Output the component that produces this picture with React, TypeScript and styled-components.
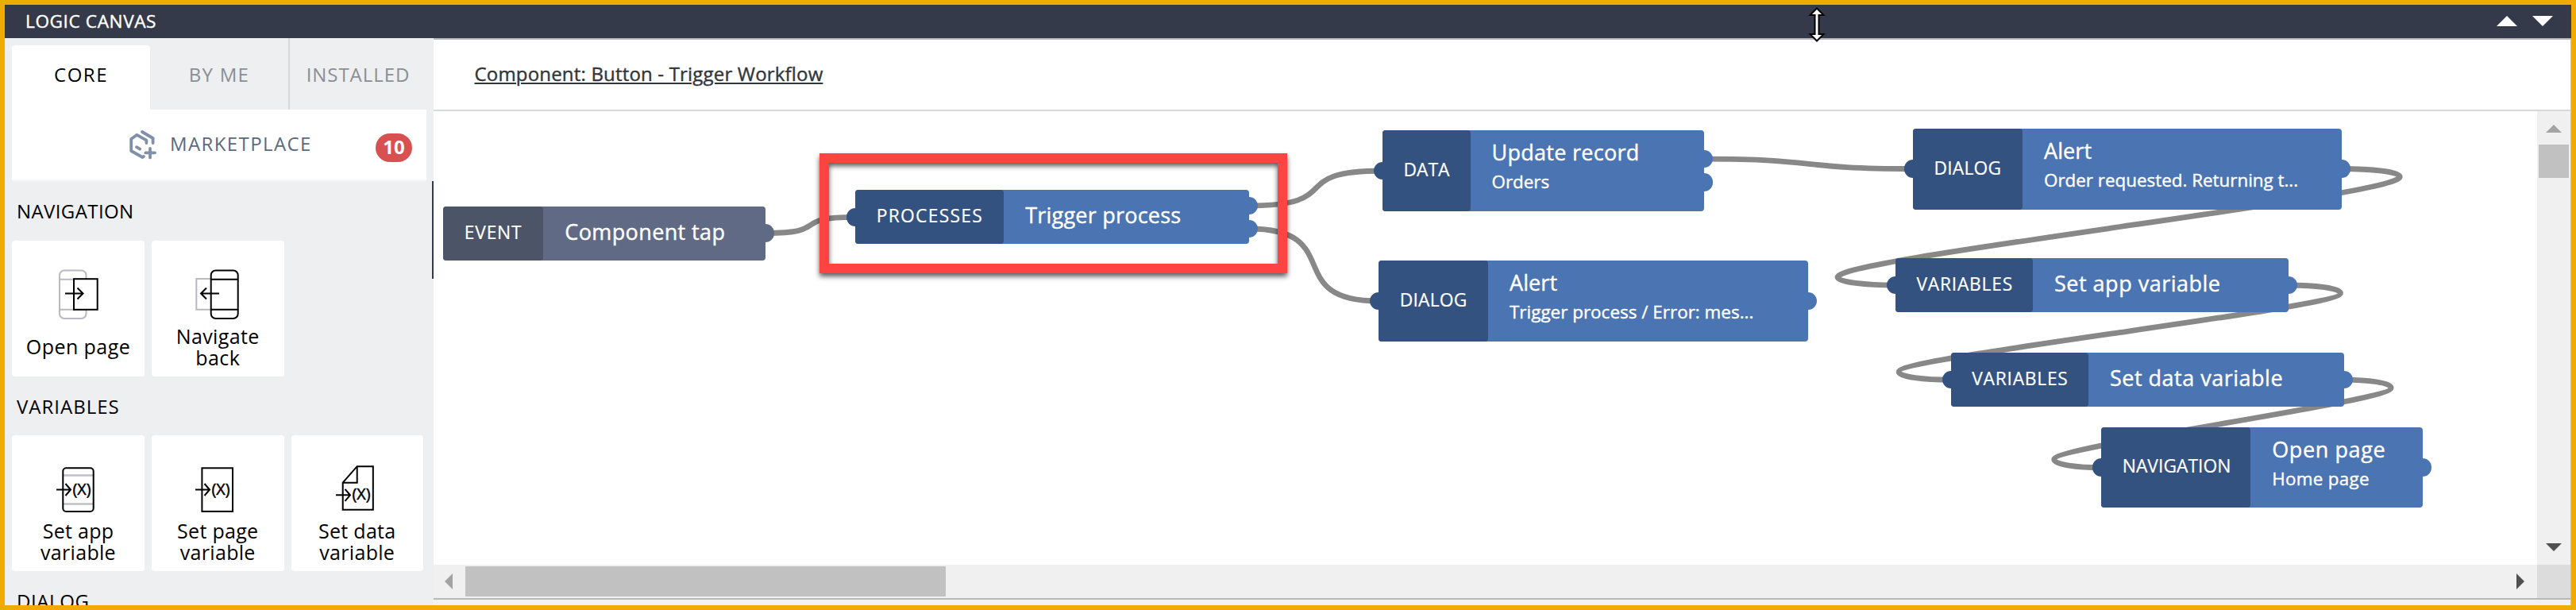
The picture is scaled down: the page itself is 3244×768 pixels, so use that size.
import React from 'react';
import styled, { createGlobalStyle } from 'styled-components';

const GlobalStyle = createGlobalStyle`
  * { box-sizing: border-box; }
  body { margin: 0; background: #fff; }
`;

/* ---------- frame ---------- */

const Frame = styled.div`
  position: relative;
  display: flex;
  flex-direction: column;
  width: 3244px;
  height: 768px;
  border: 6px solid #f0ab00;
  background: #fff;
  overflow: hidden;
  font-family: 'Open Sans', sans-serif;
  font-size: 24px;
  color: #000;
  white-space: nowrap;
`;

const TitleBar = styled.header`
  display: flex;
  flex: none;
  align-items: center;
  justify-content: space-between;
  height: 42px;
  padding: 0 23px 2px 26px;
  background: #343a4a;
  color: #fff;
  font-size: 22.6px;
  letter-spacing: 0.6px;
  -webkit-text-stroke: 0.4px #fff;
`;

const WindowButtons = styled.div`
  display: flex;
  gap: 19px;
`;

const Body = styled.div`
  display: flex;
  flex: 1;
  min-height: 0;
`;

/* ---------- sidebar ---------- */

const Sidebar = styled.aside`
  position: relative;
  display: flex;
  flex: none;
  flex-direction: column;
  width: 540px;
  padding: 0 9px;
  background: #eeeff1;
  overflow: hidden;
`;

const SplitHandle = styled.div`
  position: absolute;
  top: 180px;
  right: 0;
  width: 2px;
  height: 123px;
  background: #343a4a;
`;

const Tabs = styled.nav`
  display: flex;
  flex: none;
  align-items: flex-end;
  height: 90px;
`;

const Tab = styled.div<{ $active?: boolean; $divider?: boolean; $spacing: number }>`
  display: flex;
  align-items: center;
  justify-content: center;
  width: 174px;
  height: ${p => (p.$active ? 81 : 90)}px;
  padding-bottom: ${p => (p.$active ? 9 : 0)}px;
  border-left: ${p => (p.$divider ? '2px solid #d5d7da' : 'none')};
  border-radius: ${p => (p.$active ? '4px 4px 0 0' : 0)};
  background: ${p => (p.$active ? '#fff' : 'transparent')};
  color: ${p => (p.$active ? '#000' : '#8b8e93')};
  letter-spacing: ${p => p.$spacing}px;
`;

const Marketplace = styled.div`
  display: flex;
  flex: none;
  align-items: center;
  width: 522px;
  height: 90px;
  padding: 0 18px 0 147px;
  border-bottom: 2px solid #f5f6f8;
  background: #fff;
  color: #5b6980;
`;

const MarketplaceLabel = styled.span`
  margin: -4px 0 0 16px;
  letter-spacing: 1.4px;
`;

const Badge = styled.span`
  display: flex;
  align-items: center;
  justify-content: center;
  width: 46px;
  height: 36px;
  margin: 8px 0 0 auto;
  padding-bottom: 3px;
  border-radius: 18px;
  background: #d95052;
  color: #fff;
  font-weight: 700;
`;

const SectionTitle = styled.h2<{ $spacing: number; $height: number }>`
  flex: none;
  height: ${p => p.$height}px;
  margin: 0;
  padding: 24px 0 0 6px;
  font-size: 24px;
  font-weight: 400;
  line-height: 27px;
  letter-spacing: ${p => p.$spacing}px;
`;

const CardRow = styled.div`
  display: flex;
  flex: none;
  gap: 9px;
`;

const Card = styled.div`
  display: flex;
  flex-direction: column;
  width: 167px;
  height: 171px;
  border-radius: 4px;
  background: #fff;
  & + & { width: 166.5px; }
`;

const CardIcon = styled.svg`
  display: block;
  width: 167px;
  height: 106px;
  fill: none;
  stroke: #000;
  stroke-width: 2;
`;

const CardLabel = styled.div<{ $spacing: number }>`
  display: flex;
  flex-direction: column;
  align-items: center;
  justify-content: center;
  height: 55px;
  font-size: 25px;
  line-height: 26.7px;
  letter-spacing: ${p => p.$spacing}px;
`;

/* ---------- canvas ---------- */

const Main = styled.main`
  display: flex;
  flex: 1;
  flex-direction: column;
  border-top: 2px solid #b7b9bd;
  border-right: 1px solid #bfc3c6;
  background: #f2f2f2;
`;

const Breadcrumb = styled.div`
  display: flex;
  flex: none;
  align-items: center;
  height: 90px;
  padding: 0 0 3px 51.5px;
  border-bottom: 2px solid #d8d9dd;
  background: #fff;
`;

const Crumb = styled.a`
  color: #32363a;
  letter-spacing: 0.18px;
  text-decoration: underline;
  text-decoration-thickness: 2px;
  text-underline-offset: 2px;
  -webkit-text-stroke: 0.4px #32363a;
`;

const Viewport = styled.div`
  display: grid;
  flex: none;
  grid-template: 571px 42px / 1fr 42px;
  border-bottom: 2px solid #b7b9b9;
`;

const Stage = styled.div`
  position: relative;
  background: #fff;
  overflow: hidden;
`;

const Wires = styled.svg`
  position: absolute;
  inset: 0;
  width: 2649px;
  height: 571px;
  fill: none;
  stroke: #888;
  stroke-width: 6.8;
`;

const NodeBox = styled.div<{ $x: number; $y: number; $w: number; $h: number; $bg: string }>`
  position: absolute;
  left: ${p => p.$x}px;
  top: ${p => p.$y}px;
  display: flex;
  width: ${p => p.$w}px;
  height: ${p => p.$h}px;
  border-radius: 4px;
  background: ${p => p.$bg};
  color: #fff;
`;

const NodeKind = styled.div<{ $w: number; $bg: string; $spacing: number }>`
  position: relative;
  display: flex;
  flex: none;
  align-items: center;
  width: ${p => p.$w}px;
  padding: 0 0 3px 26.5px;
  border-radius: 4px;
  background: ${p => p.$bg};
  font-size: 22.8px;
  letter-spacing: ${p => p.$spacing - 0.2}px;
  -webkit-text-stroke: 0.2px #fff;
`;

const NodeText = styled.div<{ $double: boolean }>`
  display: flex;
  flex-direction: column;
  justify-content: ${p => (p.$double ? 'flex-start' : 'center')};
  padding: ${p => (p.$double ? '10px 0 0 27px' : '0 0 4px 27px')};
`;

const NodeTitle = styled.div<{ $spacing: number }>`
  font-size: 27px;
  line-height: 36px;
  letter-spacing: ${p => p.$spacing}px;
  -webkit-text-stroke: 0.4px #fff;
`;

const NodeSub = styled.div<{ $spacing: number }>`
  margin-top: 5px;
  font-size: 22.4px;
  line-height: 28px;
  letter-spacing: ${p => p.$spacing}px;
  -webkit-text-stroke: 0.4px #fff;
`;

const Port = styled.span<{ $side: 'left' | 'right'; $y: number; $bg: string }>`
  position: absolute;
  ${p => p.$side}: -11px;
  top: ${p => p.$y - 11.2}px;
  width: 22.4px;
  height: 22.4px;
  border-radius: 50%;
  background: ${p => p.$bg};
`;

const Highlight = styled.div`
  position: absolute;
  left: 486px;
  top: 53px;
  width: 589px;
  height: 151px;
  border: 12px solid #ff4343;
  filter: drop-shadow(0 4px 3px rgba(0, 0, 0, 0.65));
`;

const VScroll = styled.div`
  display: flex;
  flex-direction: column;
  align-items: center;
  justify-content: space-between;
  height: 571px;
  padding: 17px 0;
  background: #f0f0f0;
`;

const VThumb = styled.div`
  width: 38px;
  height: 42px;
  margin: 15px 0 auto;
  background: #c1c1c1;
`;

const HScroll = styled.div`
  display: flex;
  align-items: center;
  height: 42px;
  padding: 0 16px 0 14px;
  background: #f0f0f0;
`;

const HThumb = styled.div`
  width: 605px;
  height: 38px;
  margin: 0 auto 0 16px;
  background: #c1c1c1;
`;

const Corner = styled.div`
  background: #dcdcdc;
`;

const Pointer = styled.svg`
  position: absolute;
  left: 2271px;
  top: 2px;
`;

/* ---------- drawings ---------- */

function Triangle({ dir, size, color }: { dir: 'up' | 'down' | 'left' | 'right'; size: number; color: string }) {
  const h = size / 2;
  const vertical = dir === 'up' || dir === 'down';
  const points = {
    up: `0,${h} ${h},0 ${size},${h}`,
    down: `0,0 ${size},0 ${h},${h}`,
    left: `${h},0 ${h},${size} 0,${h}`,
    right: `0,0 ${h},${h} 0,${size}`,
  }[dir];
  return (
    <svg width={vertical ? size : h} height={vertical ? h : size} display="block">
      <polygon points={points} fill={color} />
    </svg>
  );
}

const MarketIcon = () => (
  <svg width="36" height="38" viewBox="161 163 36 38" fill="none" stroke="#8090ab" strokeWidth="3.8" strokeLinecap="round" strokeLinejoin="round">
    <path d="M178 166 L191.6 174 V180" />
    <path d="M183.4 180 V176.6 L171.4 169.8 L164.2 175 V190 L178.5 198 L180 197" />
    <path d="M171 185.2 L175.2 187.6" />
    <path d="M188 187 V198.4 M182.3 192.3 H194" />
  </svg>
);

const VarSymbol = ({ x, y }: { x: number; y: number }) => (
  <>
    <path d={`M${x - 21} ${y} H${x - 3.5} M${x - 9.5} ${y - 7.5} L${x - 3} ${y} L${x - 9.5} ${y + 7.5}`} />
    <text x={x - 0.5} y={y + 6} fontSize="20.5" textLength="23" lengthAdjust="spacingAndGlyphs" fill="#000" strokeWidth="0.5">(X)</text>
  </>
);

const OpenPageIcon = () => (
  <CardIcon viewBox="15 303 167 106">
    <g stroke="#b9bac1">
      <rect x="75" y="340.5" width="33.5" height="60.5" rx="6" />
      <path d="M75 351.7 H108.5 M75 389.8 H108.5" />
    </g>
    <rect x="93" y="351.2" width="29.7" height="38.6" fill="#fff" />
    <path d="M82 369.5 H104.5 M97.5 362.5 L104.5 369.5 L97.5 376.5" />
  </CardIcon>
);

const NavigateBackIcon = () => (
  <CardIcon viewBox="191 303 167 106">
    <path d="M265 351 H247.3 V389.8 H265" stroke="#b9bac1" />
    <rect x="265.7" y="340.5" width="34" height="60.5" rx="6" />
    <path d="M265.7 351.7 H299.7 M265.7 389.8 H299.7" />
    <path d="M276 369.5 H253 M260 362.5 L253 369.5 L260 376.5" />
  </CardIcon>
);

const SetAppIcon = () => (
  <CardIcon viewBox="15 548 167 106">
    <path d="M79 598.5 H118 M79 634.5 H118" stroke="#bfc0c8" strokeWidth="2.6" />
    <rect x="79.3" y="589.3" width="38.4" height="54.6" rx="4" />
    <VarSymbol x={92} y={616.5} />
  </CardIcon>
);

const SetPageIcon = () => (
  <CardIcon viewBox="191 548 167 106">
    <rect x="254.4" y="589.3" width="38.6" height="54.6" />
    <VarSymbol x={267} y={616.5} />
  </CardIcon>
);

const SetDataIcon = () => (
  <CardIcon viewBox="366 548 167 106">
    <path d="M430.7 607.7 L448.7 587.2 H468.8 V641.7 H430.7 Z M430.7 607.7 H448.7 V587.2" />
    <VarSymbol x={443} y={623.3} />
  </CardIcon>
);

/* ---------- graph data ---------- */

const ORIGIN_X = 546;
const ORIGIN_Y = 140;

const BLUE = { light: '#4b74b2', dark: '#34527f' };
const SLATE = { light: '#616a84', dark: '#4c5467' };

interface FlowNode {
  kind: string; kindSpacing: number; title: string; titleSpacing: number; sub?: string; subSpacing?: number;
  x: number; y: number; w: number; h: number; kindW: number; input?: number; outputs: number[]; event?: boolean;
}

const nodes: FlowNode[] = [
  { kind: 'EVENT', kindSpacing: 1, title: 'Component tap', titleSpacing: 0.38, x: 558.3, y: 259.7, w: 405.5, h: 68, kindW: 126, outputs: [33.8], event: true },
  { kind: 'PROCESSES', kindSpacing: 1.5, title: 'Trigger process', titleSpacing: 0.22, x: 1077.2, y: 239.4, w: 495.4, h: 68, kindW: 187, input: 34, outputs: [19.6, 48.7] },
  { kind: 'DATA', kindSpacing: 0.2, title: 'Update record', titleSpacing: 0.28, sub: 'Orders', subSpacing: 0, x: 1741, y: 164, w: 405, h: 101.6, kindW: 110.5, input: 51, outputs: [36.2, 65.4] },
  { kind: 'DIALOG', kindSpacing: 0.4, title: 'Alert', titleSpacing: 0.1, sub: 'Trigger process / Error: mes...', subSpacing: 0.03, x: 1736.3, y: 328.3, w: 540.7, h: 101.6, kindW: 137.7, input: 50.7, outputs: [50.7] },
  { kind: 'DIALOG', kindSpacing: 0.4, title: 'Alert', titleSpacing: 0.1, sub: 'Order requested. Returning t...', subSpacing: 0, x: 2409, y: 162, w: 540.3, h: 101.6, kindW: 138, input: 50.5, outputs: [50.5] },
  { kind: 'VARIABLES', kindSpacing: 0.95, title: 'Set app variable', titleSpacing: 0.5, x: 2387, y: 325, w: 495, h: 67.8, kindW: 173, input: 34, outputs: [34] },
  { kind: 'VARIABLES', kindSpacing: 0.95, title: 'Set data variable', titleSpacing: 0.5, x: 2456.7, y: 444.2, w: 495, h: 67.8, kindW: 173.3, input: 34, outputs: [34] },
  { kind: 'NAVIGATION', kindSpacing: 0.25, title: 'Open page', titleSpacing: 0.6, sub: 'Home page', subSpacing: 0.3, x: 2646.2, y: 537.6, w: 404.6, h: 101.4, kindW: 188, input: 51, outputs: [51] },
];

const forward = (x1: number, y1: number, x2: number, y2: number, d: number) =>
  `M${x1} ${y1} C${x1 + d} ${y1} ${x2 - d} ${y2} ${x2} ${y2}`;

const backward = (x1: number, y1: number, x2: number, y2: number, off: number) => {
  const mx = (x1 + x2) / 2;
  const my = (y1 + y2) / 2;
  const rx = x1 + off;
  const lx = x2 - off;
  const ry = y1 + 10;
  const ly = y2 - 10;
  const ty = (my - ry) * 0.19;
  const px = (rx - mx) * 0.54;
  const py = (my - ry) * 0.44;
  return `M${x1} ${y1} C${x1 + off * 0.5} ${y1} ${rx} ${ry - 6.5} ${rx} ${ry}
    C${rx} ${ry + ty} ${mx + px} ${my - py} ${mx} ${my}
    C${mx - px} ${my + py} ${lx} ${ly - ty} ${lx} ${ly}
    C${lx} ${ly + 6.5} ${x2 - off * 0.5} ${y2} ${x2} ${y2}`;
};

const wires = [
  forward(964, 293.5, 1077, 273.4, 85),
  forward(1573, 259, 1741, 215, 124),
  forward(1573, 288, 1736, 379, 124),
  forward(2146, 200.2, 2409, 212.5, 150),
  backward(2949.3, 212.5, 2387, 359, 73),
  backward(2882, 359, 2456.6, 478.2, 65.5),
  backward(2951.7, 478.2, 2646.2, 588.6, 59.5),
];

function GraphNode({ n }: { n: FlowNode }) {
  const c = n.event ? SLATE : BLUE;
  return (
    <NodeBox $x={n.x - ORIGIN_X} $y={n.y - ORIGIN_Y} $w={n.w} $h={n.h} $bg={c.light}>
      {n.input !== undefined && <Port $side="left" $y={n.input} $bg={c.dark} />}
      {n.outputs.map(y => <Port key={y} $side="right" $y={y} $bg={c.light} />)}
      <NodeKind $w={n.kindW} $bg={c.dark} $spacing={n.kindSpacing}>{n.kind}</NodeKind>
      <NodeText $double={!!n.sub}>
        <NodeTitle $spacing={n.titleSpacing}>{n.title}</NodeTitle>
        {n.sub && <NodeSub $spacing={n.subSpacing ?? 0}>{n.sub}</NodeSub>}
      </NodeText>
    </NodeBox>
  );
}

export default function App() {
  return (
    <Frame>
      <GlobalStyle />
      <TitleBar>
        <span>LOGIC CANVAS</span>
        <WindowButtons>
          <Triangle dir="up" size={26} color="#fff" />
          <Triangle dir="down" size={26} color="#fff" />
        </WindowButtons>
      </TitleBar>
      <Body>
        <Sidebar>
          <Tabs>
            <Tab $active $spacing={1.5}>CORE</Tab>
            <Tab $spacing={1.25}>BY ME</Tab>
            <Tab $divider $spacing={0.95}>INSTALLED</Tab>
          </Tabs>
          <Marketplace>
            <MarketIcon />
            <MarketplaceLabel>MARKETPLACE</MarketplaceLabel>
            <Badge>10</Badge>
          </Marketplace>
          <SectionTitle $spacing={0.4} $height={75}>NAVIGATION</SectionTitle>
          <CardRow>
            <Card><OpenPageIcon /><CardLabel $spacing={0.45}><span>Open page</span></CardLabel></Card>
            <Card><NavigateBackIcon /><CardLabel $spacing={0.4}><span>Navigate</span><span>back</span></CardLabel></Card>
          </CardRow>
          <SectionTitle $spacing={1} $height={74}>VARIABLES</SectionTitle>
          <CardRow>
            <Card><SetAppIcon /><CardLabel $spacing={0.3}><span>Set app</span><span>variable</span></CardLabel></Card>
            <Card><SetPageIcon /><CardLabel $spacing={0.3}><span>Set page</span><span>variable</span></CardLabel></Card>
            <Card><SetDataIcon /><CardLabel $spacing={0.3}><span>Set data</span><span>variable</span></CardLabel></Card>
          </CardRow>
          <SectionTitle $spacing={0.6} $height={74}>DIALOG</SectionTitle>
          <SplitHandle />
        </Sidebar>
        <Main>
          <Breadcrumb><Crumb>Component: Button - Trigger Workflow</Crumb></Breadcrumb>
          <Viewport>
            <Stage>
              <Wires viewBox={`${ORIGIN_X} ${ORIGIN_Y} 2649 571`}>
                {wires.map(d => <path key={d} d={d} />)}
              </Wires>
              {nodes.map(n => <GraphNode key={n.kind + n.x} n={n} />)}
              <Highlight />
            </Stage>
            <VScroll>
              <Triangle dir="up" size={20} color="#a3a3a3" />
              <VThumb />
              <Triangle dir="down" size={20} color="#505050" />
            </VScroll>
            <HScroll>
              <Triangle dir="left" size={20} color="#a3a3a3" />
              <HThumb />
              <Triangle dir="right" size={20} color="#505050" />
            </HScroll>
            <Corner />
          </Viewport>
        </Main>
      </Body>
      <Pointer width="22" height="46" viewBox="0 0 22 46">
        <path d="M11 2.5 L19.5 11 H13.5 V35 H19.5 L11 43.5 L2.5 35 H8.5 V11 H2.5 Z" fill="#fff" stroke="#000" strokeWidth="2" />
      </Pointer>
    </Frame>
  );
}
